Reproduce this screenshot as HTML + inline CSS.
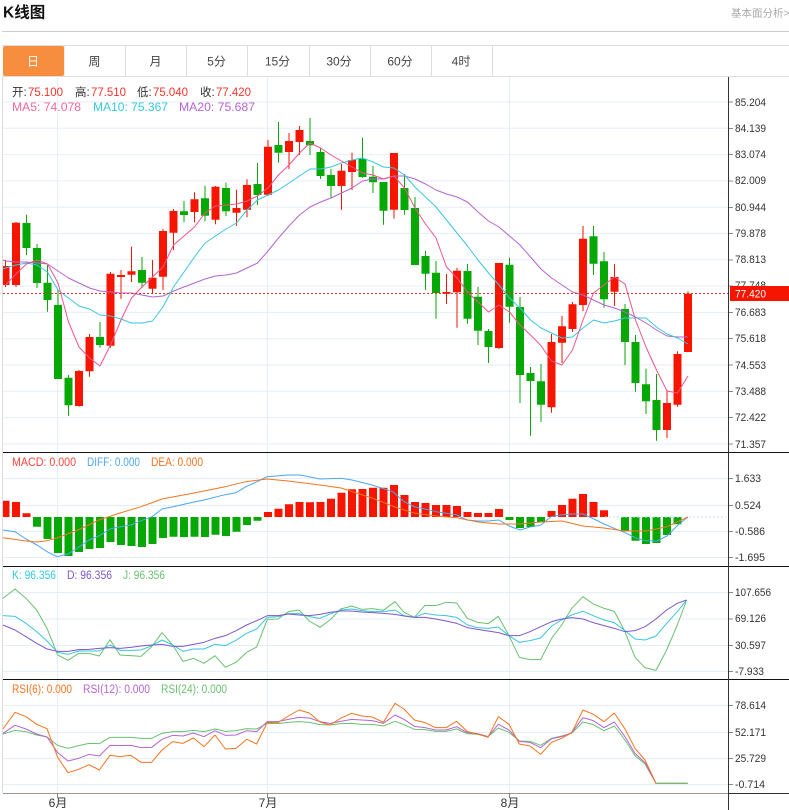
<!DOCTYPE html>
<html lang="zh">
<head>
<meta charset="utf-8">
<title>K线图</title>
<style>
html,body{margin:0;padding:0;background:#fff;width:789px;height:810px;overflow:hidden}
svg{display:block}
text{font-family:"Liberation Sans","Noto Sans CJK SC",sans-serif;font-size:11.5px}
.ax{font-size:11px;fill:#333}
.tab{font-size:12px;fill:#444;text-anchor:middle}
.grid{stroke:#e6eef5;stroke-width:1;fill:none}
.l{fill:none;stroke-width:1;stroke-linejoin:round}
.s .l{vector-effect:non-scaling-stroke}
.tick{stroke:#888;stroke-width:1}
</style>
</head>
<body>
<svg width="789" height="810" viewBox="0 0 789 810" xmlns="http://www.w3.org/2000/svg">
<rect width="789" height="810" fill="#fff"/>
<text x="3" y="17.500" style="font-size:15.5px;font-weight:bold" fill="#111">K线图</text>
<text x="731" y="16.500" style="font-size:10.5px" fill="#aaa">基本面分析&gt;</text>
<path d="M2 31.500H789" stroke="#ccc"/>
<path d="M2 45.500H789M2 76.500H789" stroke="#ddd"/>
<path d="M64 46V76M125.500 46V76M186.500 46V76M247.500 46V76M309.500 46V76M370.500 46V76M431.500 46V76M492.500 46V76" stroke="#ddd"/>
<rect x="3" y="46" width="61" height="30" rx="2" fill="#f68d3f"/>
<text x="33" y="65.500" class="tab" style="fill:#fff">日</text>
<text x="94.500" y="65.500" class="tab">周</text>
<text x="155.500" y="65.500" class="tab">月</text>
<text x="216.500" y="65.500" class="tab">5分</text>
<text x="277.500" y="65.500" class="tab">15分</text>
<text x="339" y="65.500" class="tab">30分</text>
<text x="400" y="65.500" class="tab">60分</text>
<text x="461" y="65.500" class="tab">4时</text>

<!-- grids -->
<path class="grid" d="M3 102H728M3 128.300H728M3 154.600H728M3 180.900H728M3 207.200H728M3 233.500H728M3 259.800H728M3 286.100H728M3 312.400H728M3 338.700H728M3 365H728M3 391.300H728M3 417.600H728M3 443.900H728"/>
<path class="grid" d="M3 478.500H728M3 505.500H728M3 531.500H728M3 557.500H728M3 592.500H728M3 619H728M3 645.500H728M3 671.500H728M3 705.500H728M3 732.500H728M3 758.500H728M3 784.500H728"/>
<path class="grid" d="M57.500 77V793M267.500 77V793M509.500 77V793"/>
<path d="M2.500 77V793" stroke="#dcdcdc"/>

<!-- candle wicks -->
<path stroke="#f51500" fill="none" d="M5.500 260V287M16 222V287M79 370V406.700M89.500 334V376.700M110.500 272V347.700M121 270V299M131.500 246.700V282M152.500 260V294M163 229V290M173.500 209V250M194.500 192.300V222.300M215.500 186V224.300M236.500 189.700V225.700M247 179.300V217.300M268 140V196M289 133V169M299.500 126V155M341.500 164V209.700M352 152.700V190M394 153V218.700M446.500 274V304M457 267.700V327.700M499 263V349M551.500 334V412.700M562 316V363M572.500 302V332M583 226V311M614.500 264V306M667 390V438M677.500 351.300V406.700M688 291.300V352"/>
<path stroke="#05a805" fill="none" d="M26.500 214.700V255M37 244V288M47.500 265V311.700M58 290V379M68.500 375V415.700M100 322V347.700M142 257V288M184 201V222.300M205 185.700V221.300M226 182.700V216M257.500 163V205M278.500 122V162.700M310 118V155M320.500 148V179M331 169V198M362.500 137.700V177.700M373 166V193M383.500 182V224.700M404.500 174V214.700M415 197V265M425.500 251V290M436 261V318.700M467.500 264V323.700M478 287V345M488.500 329V363M509.500 257.700V322.700M520 297V403M530.500 367V435.700M541 364V422M593.500 226V275M604 252V307.700M625 304V365M635.500 335V391.700M646 368.700V414M656.500 374V440.700"/>
<!-- candle bodies -->
<path fill="#f51500" d="M3 266H9.500V285H3zM12 222.700h8V285h-8zM75 371h8V406h-8zM85.500 337h8V371.300h-8zM106.500 273.700h8V345.700h-8zM117 275h8v2h-8zM127.500 271.300h8V274.700h-8zM148.500 277.700h8V288.700h-8zM159 231h8V276.700h-8zM169.500 211h8V232.700h-8zM190.500 199.300h8V212h-8zM211.500 186.700h8V219.700h-8zM232.500 208h8V212.700h-8zM243 185h8V209.700h-8zM264 146.700h8V194.700h-8zM285 141h8V152h-8zM295.500 130h8V142h-8zM337.500 170.700h8V186h-8zM348 160h8V172h-8zM390 153h8V209.700h-8zM442.500 292h8V293.700h-8zM453 270.700h8V292.300h-8zM495 263h8V348h-8zM547.500 342h8V407.300h-8zM558 326.300h8V342.700h-8zM568.500 304.300h8V329h-8zM579 238.700h8V305h-8zM610.500 277h8V291.700h-8zM663 403h8V430h-8zM673.500 354h8V404.700h-8zM684 293.700h8V352h-8z"/>
<path fill="#05a805" d="M22.500 223h8V248h-8zM33 248h8V283h-8zM43.500 282.700h8V300h-8zM54 305h8V379h-8zM64.500 377.700h8V405.300h-8zM96 337h8V345h-8zM138 270h8V282.700h-8zM180 211.300h8V215h-8zM201 198.300h8V215.700h-8zM222 188h8V211.300h-8zM253.500 184h8V195h-8zM274.500 145h8V152.700h-8zM306 141h8V145.300h-8zM316.500 152h8V176h-8zM327 175h8V186h-8zM358.500 158.700h8V177h-8zM369 176.700h8V182.300h-8zM379.500 182h8V210.700h-8zM400.500 188h8V210h-8zM411 208h8V265h-8zM421.500 256h8V273.700h-8zM432 272.700h8V293h-8zM463.500 271h8V318.700h-8zM474 296.700h8V330.700h-8zM484.500 331h8V347h-8zM505.500 264.700h8V306.700h-8zM516 307h8V375h-8zM526.500 373h8V381h-8zM537 381.300h8V404.700h-8zM589.500 236.300h8V263.700h-8zM600 261.300h8V299.300h-8zM621 309h8V342h-8zM631.500 342h8V383h-8zM642 384.300h8V401.300h-8zM652.500 400h8V430h-8z"/>

<!-- MA lines -->
<polyline class="l" stroke="#b565d0" points="3,260 5.500,261 16,262 26.500,262 37,263 47.500,264 58,271 68.500,278 79,283 89.500,288 100,291 110.500,292 121,293 131.500,293 142,295 152.500,297 163,296 173.500,291 184,287 194.500,283 205,279 215.500,276 226,275 236.500,273 247,268 257.500,263 268,251 278.500,238 289,226 299.500,215 310,207 320.500,202 331,198 341.500,193 352,188 362.500,181 373,179 383.500,179 394,176 404.500,176 415,179 425.500,184 436,190 446.500,194 457,197 467.500,202 478,212 488.500,221 499,227 509.500,236 520,245 530.500,257 541,269 551.500,278 562,285 572.500,292 583,295 593.500,300 604,305 614.500,308 625,312 635.500,317 646,323 656.500,330 667,336 677.500,337 688,337"/>
<polyline class="l" stroke="#39c6dd" points="3,269 5.500,268 16,265 26.500,263 37,265 47.500,272 58,290 68.500,298 79,306 89.500,309 100,315 110.500,316 121,319 131.500,323 142,323 152.500,321 163,307 173.500,287 184,272 194.500,257 205,243 215.500,236 226,229 236.500,223 247,210 257.500,200 268,195 278.500,190 289,183 299.500,176 310,169 320.500,169 331,167 341.500,163 352,160 362.500,158 373,162 383.500,167 394,168 404.500,175 415,187 425.500,197 436,207 446.500,220 457,233 467.500,246 478,260 488.500,273 499,285 509.500,298 520,308 530.500,320 541,328 551.500,333 562,338 572.500,337 583,328 593.500,320 604,323 614.500,321 625,318 635.500,318 646,318 656.500,327 667,334 677.500,338 688,344"/>
<polyline class="l" stroke="#f0548c" points="5.500,285 16,274 26.500,264 37,260 47.500,264 58,283 68.500,322 79,347 89.500,358 100,366 110.500,345 121,320 131.500,298 142,287 152.500,277 163,267 173.500,245 184,236 194.500,227 205,213 215.500,206 226,205 236.500,204 247,201 257.500,196 268,188 278.500,175 289,165 299.500,153 310,143 320.500,148 331,155 341.500,161 352,167 362.500,173 373,175 383.500,179 394,176 404.500,188 415,208 425.500,224 436,238 446.500,267 457,278 467.500,292 478,302 488.500,312 499,305 509.500,312 520,325 530.500,335 541,345.700 551.500,361 562,365 572.500,350 583,320 593.500,293 604,285 614.500,277 625,284 635.500,320 646,347 656.500,370 667,391 677.500,393 688,376"/>
<path d="M3 293.500H730" stroke="#e5312a" stroke-dasharray="2 2"/>

<!-- MACD -->
<path fill="#f51500" d="M3 500.700H9.500V517H3zM12 502h8v15h-8zM22.500 513.300h8V517h-8zM264 512h8v5h-8zM274.500 508.700h8V517h-8zM285 504.300h8V517h-8zM295.500 502h8v15h-8zM306 502.300h8V517h-8zM316.500 502h8v15h-8zM327 498.700h8V517h-8zM337.500 492.700h8V517h-8zM348 489.300h8V517h-8zM358.500 489h8v28h-8zM369 487.700h8V517h-8zM379.500 487.700h8V517h-8zM390 485h8v32h-8zM400.500 495h8v22h-8zM411 502h8v15h-8zM421.500 503h8v14h-8zM432 505h8v12h-8zM442.500 505h8v12h-8zM453 506h8v11h-8zM463.500 512h8v5h-8zM474 513h8v4h-8zM484.500 513h8v4h-8zM495 509h8v8h-8zM547.500 511h8v6h-8zM558 505h8v12h-8zM568.500 498.700h8V517h-8zM579 494h8v23h-8zM589.500 502h8v15h-8zM600 510.300h8V517h-8z"/>
<path fill="#05a805" d="M33 517h8v9.700h-8zM43.500 517h8v22h-8zM54 517h8v36h-8zM64.500 517h8v39h-8zM75 517h8v35h-8zM85.500 517h8v32h-8zM96 517h8v31h-8zM106.500 517h8v25h-8zM117 517h8v28h-8zM127.500 517h8v29h-8zM138 517h8v30h-8zM148.500 517h8v27h-8zM159 517h8v21h-8zM169.500 517h8v19.700h-8zM180 517h8v20h-8zM190.500 517h8v19.700h-8zM201 517h8v20h-8zM211.500 517h8v17.700h-8zM222 517h8v19h-8zM232.500 517h8v14.700h-8zM243 517h8v8h-8zM253.500 517h8v3.700h-8zM505.500 517h8v3h-8zM516 517h8v11h-8zM526.500 517h8v10h-8zM537 517h8v5.300h-8zM621 517h8v14.300h-8zM631.500 517h8v23.700h-8zM642 517h8v27h-8zM652.500 517h8v26h-8zM663 517h8v18h-8zM673.500 517h8v7.300h-8z"/>
<path d="M605 517H726" stroke="#bfe3ee" stroke-dasharray="2 2"/>
<polyline class="l" stroke="#4da6f0" points="3,530 15,531.700 26,539 37,545 47,551.700 57,556.700 68,554 78,547.700 89,540 99,536 110,529 120,526.700 131,525 141,520.700 152,516.700 162,509 173,506.700 194,502 204,500 225,494.700 236,492.700 246,486.700 257,481.700 267,476.700 288,475 300,475 320,479 341,478.300 352,480 372,485 393,491.700 404,501.700 415,507 425,509 436,511.700 457,515 467,520 478,521 488,521 499,520 509,526 520,530 530,527 541,525 551,516.700 562,514.700 573,514 583,514 594,519 604,524 615,528.700 625,532.700 636,538 646,540.700 657,541 667,536 678,525 688,517"/>
<polyline class="l" stroke="#f5741f" points="3,537.700 26,541 37,542 47,540.700 57,538 78,530 99,520 120,513 141,506.700 162,499 194,493 225,486.700 246,481.700 267,479 288,481 320,485 341,488 372,498 395,507 415,513.300 436,516 457,517.700 478,522 499,524 520,524 541,522 562,521 583,526 604,528 625,531 646,531 667,526.700 688,517"/>

<!-- KDJ -->
<g class="s" transform="translate(0,565) scale(.33333)">
<polyline class="l" stroke="#6ac06f" points="9,100 45,72 78,100 110,135 141,190 173,270 204,286 236,265 267,265 298,273 330,224 360,270 392,272 423,274 455,245 486,203 518,240 549,289 580,280 612,295 645,272 676,307 708,292 740,262 770,246 802,163 834,162 865,140 897,135 928,168 960,187 990,165 1022,132 1055,123 1085,133 1117,131 1150,136 1185,110 1212,142 1243,157 1275,121 1307,122 1338,112 1370,114 1402,160 1433,172 1464,176 1495,154 1527,212 1558,277 1590,284 1622,284 1655,220 1685,180 1715,130 1749,95 1780,117 1812,130 1843,139 1875,200 1905,277 1935,308 1968,316 2000,255 2032,180 2060,105"/>
<polyline class="l" stroke="#39c6dd" points="9,152 45,154 78,175 110,200 141,228 173,262 204,268 236,258 267,258 298,258 330,240 360,256 392,256 423,255 455,242 486,225 518,240 549,259 580,252 612,252 645,238 676,242 708,226 740,205 770,192 802,157 834,155 865,146 897,146 928,155 960,160 990,147 1022,135 1055,132 1085,137 1117,140 1150,140 1185,135 1212,152 1243,157 1275,145 1307,150 1338,152 1370,157 1402,180 1433,188 1464,190 1495,186 1527,212 1558,232 1590,227 1622,219 1655,183 1685,165 1715,150 1749,139 1780,152 1812,165 1843,173 1875,197 1905,222 1935,225 1968,213 2000,175 2032,140 2060,105"/>
<polyline class="l" stroke="#7d58c8" points="9,180 45,195 78,215 110,235 141,252 173,259 204,259 236,254 267,253 298,250 330,248 360,250 392,247 423,243 455,240 486,238 518,244 549,244 580,238 612,232 645,220 676,212 708,197 740,180 770,167 802,152 834,152 865,147 897,150 928,152 960,148 990,142 1022,138 1055,138 1085,141 1117,143 1150,145 1185,148 1212,153 1243,157 1275,157 1307,162 1338,168 1370,175 1402,188 1433,193 1464,198 1495,203 1527,212 1558,212 1590,200 1622,185 1655,170 1685,162 1715,158 1749,162 1780,173 1812,182 1843,190 1875,200 1905,197 1935,185 1968,162 2000,135 2032,115 2060,105"/>
</g>

<!-- RSI -->
<g class="s" transform="translate(0,680) scale(.33333)">
<polyline class="l" stroke="#6ac06f" points="9,162 45,151 78,155 110,165 141,171 173,196 204,205 236,197 267,190 298,191 330,172 360,172 392,172 423,175 455,175 486,160 518,155 549,155 580,151 612,155 645,147 676,154 708,152 740,146 770,147 802,130 834,131 865,127 897,125 928,127 960,134 990,135 1022,131 1055,130 1085,133 1117,133 1150,138 1185,124 1212,134 1243,148 1275,149 1307,154 1338,154 1370,147 1402,161 1433,163 1464,170 1495,144 1527,157 1558,183 1590,184 1622,196 1655,175 1685,168 1715,160 1749,126 1780,134 1812,152 1843,138 1875,180 1905,227 1935,252 1968,310 2063,310"/>
<polyline class="l" stroke="#b565d0" points="9,160 45,136 78,147 110,162 141,171 173,218 204,243 236,235 267,223 298,228 330,196 360,197 392,196 423,203 455,202 486,178 518,166 549,168 580,159 612,170 645,152 676,166 708,165 740,152 770,155 802,125 834,125 865,118 897,112 928,114 960,125 990,130 1022,124 1055,118 1085,120 1117,122 1150,130 1185,105 1212,118 1243,139 1275,143 1307,150 1338,150 1370,140 1402,158 1433,161 1464,170 1495,133 1527,150 1558,184 1590,187 1622,203 1655,176 1685,170 1715,158 1749,113 1780,122 1812,143 1843,126 1875,170 1905,220 1935,248 1968,310 2063,310"/>
<polyline class="l" stroke="#f5741f" points="9,147 45,97 78,110 110,133 141,146 173,232 204,278 236,268 267,254 298,270 330,226 360,230 392,226 423,247 455,247 486,210 518,185 549,190 580,174 612,200 645,165 676,207 708,205 740,178 770,192 802,127 834,128 865,108 897,90 928,99 960,126 990,135 1022,115 1055,100 1085,108 1117,111 1150,127 1185,70 1212,87 1243,120 1275,128 1307,143 1338,143 1370,124 1402,155 1433,162 1464,172 1495,110 1527,133 1558,192 1590,198 1622,223 1655,187 1685,175 1715,158 1749,90 1780,103 1812,125 1843,99 1875,147 1905,205 1935,240 1968,310 2063,310"/>
<polyline class="l" stroke="#6ac06f" points="1968,310 2063,310"/>
</g>

<!-- frame -->
<path d="M3 452.500H789M3 566.500H789M3 679.500H789" stroke="#111" fill="none"/>
<path d="M3 793.500H728" stroke="#999"/>
<path d="M728.500 793.500H789" stroke="#333"/>
<path d="M728.500 77V810" stroke="#333"/>
<path class="tick" d="M57.500 793V798M267.500 793V798M509.500 793V798"/>
<path class="tick" d="M729 102H733M729 128.500H733M729 154.500H733M729 181H733M729 207.500H733M729 233.500H733M729 260H733M729 286H733M729 312.500H733M729 338.500H733M729 365H733M729 391.500H733M729 417.500H733M729 444H733M729 478.500H733M729 505.500H733M729 531.500H733M729 557.500H733M729 592.500H733M729 619H733M729 645.500H733M729 671.500H733M729 705.500H733M729 732.500H733M729 758.500H733M729 784.500H733"/>

<!-- axis labels -->
<text class="ax" x="735" y="106" textLength="31" lengthAdjust="spacingAndGlyphs">85.204</text>
<text class="ax" x="735" y="132" textLength="31" lengthAdjust="spacingAndGlyphs">84.139</text>
<text class="ax" x="735" y="158" textLength="31" lengthAdjust="spacingAndGlyphs">83.074</text>
<text class="ax" x="735" y="184" textLength="31" lengthAdjust="spacingAndGlyphs">82.009</text>
<text class="ax" x="735" y="211" textLength="31" lengthAdjust="spacingAndGlyphs">80.944</text>
<text class="ax" x="735" y="237" textLength="31" lengthAdjust="spacingAndGlyphs">79.878</text>
<text class="ax" x="735" y="263" textLength="31" lengthAdjust="spacingAndGlyphs">78.813</text>
<text class="ax" x="735" y="289" textLength="31" lengthAdjust="spacingAndGlyphs">77.748</text>
<text class="ax" x="735" y="316" textLength="31" lengthAdjust="spacingAndGlyphs">76.683</text>
<text class="ax" x="735" y="342" textLength="31" lengthAdjust="spacingAndGlyphs">75.618</text>
<text class="ax" x="735" y="369" textLength="31" lengthAdjust="spacingAndGlyphs">74.553</text>
<text class="ax" x="735" y="395" textLength="31" lengthAdjust="spacingAndGlyphs">73.488</text>
<text class="ax" x="735" y="421" textLength="31" lengthAdjust="spacingAndGlyphs">72.422</text>
<text class="ax" x="735" y="448" textLength="31" lengthAdjust="spacingAndGlyphs">71.357</text>
<rect x="730" y="286" width="59" height="15" fill="#f51500"/>
<text class="ax" x="735" y="297.500" textLength="31" lengthAdjust="spacingAndGlyphs" style="fill:#fff">77.420</text>

<text class="ax" x="735" y="482" textLength="26" lengthAdjust="spacingAndGlyphs">1.633</text>
<text class="ax" x="735" y="509" textLength="26" lengthAdjust="spacingAndGlyphs">0.524</text>
<text class="ax" x="735" y="535" textLength="30" lengthAdjust="spacingAndGlyphs">-0.586</text>
<text class="ax" x="735" y="561" textLength="30" lengthAdjust="spacingAndGlyphs">-1.695</text>

<text class="ax" x="735" y="596" textLength="36" lengthAdjust="spacingAndGlyphs">107.656</text>
<text class="ax" x="735" y="622" textLength="31" lengthAdjust="spacingAndGlyphs">69.126</text>
<text class="ax" x="735" y="649" textLength="31" lengthAdjust="spacingAndGlyphs">30.597</text>
<text class="ax" x="735" y="675" textLength="29" lengthAdjust="spacingAndGlyphs">-7.933</text>

<text class="ax" x="735" y="709" textLength="31" lengthAdjust="spacingAndGlyphs">78.614</text>
<text class="ax" x="735" y="736" textLength="31" lengthAdjust="spacingAndGlyphs">52.171</text>
<text class="ax" x="735" y="762" textLength="31" lengthAdjust="spacingAndGlyphs">25.729</text>
<text class="ax" x="735" y="788" textLength="30" lengthAdjust="spacingAndGlyphs">-0.714</text>

<text x="58" y="807" text-anchor="middle" style="font-size:12px" fill="#333">6月</text>
<text x="268" y="807" text-anchor="middle" style="font-size:12px" fill="#333">7月</text>
<text x="510" y="807" text-anchor="middle" style="font-size:12px" fill="#333">8月</text>

<!-- legends -->
<text x="12" y="96" fill="#333">开:</text><text x="28" y="96" fill="#f5332b" textLength="35" lengthAdjust="spacingAndGlyphs">75.100</text>
<text x="75" y="96" fill="#333">高:</text><text x="91" y="96" fill="#f5332b" textLength="35" lengthAdjust="spacingAndGlyphs">77.510</text>
<text x="137" y="96" fill="#333">低:</text><text x="153" y="96" fill="#f5332b" textLength="35" lengthAdjust="spacingAndGlyphs">75.040</text>
<text x="200" y="96" fill="#333">收:</text><text x="216" y="96" fill="#f5332b" textLength="35" lengthAdjust="spacingAndGlyphs">77.420</text>
<text x="12" y="111" fill="#f0689a" textLength="69" lengthAdjust="spacingAndGlyphs">MA5: 74.078</text>
<text x="93" y="111" fill="#36c9dd" textLength="75" lengthAdjust="spacingAndGlyphs">MA10: 75.367</text>
<text x="179" y="111" fill="#b565d0" textLength="76" lengthAdjust="spacingAndGlyphs">MA20: 75.687</text>

<text x="12" y="466" fill="#f5453c" textLength="64" lengthAdjust="spacingAndGlyphs">MACD: 0.000</text>
<text x="87" y="466" fill="#4da6f0" textLength="53" lengthAdjust="spacingAndGlyphs">DIFF: 0.000</text>
<text x="151" y="466" fill="#f5741f" textLength="52" lengthAdjust="spacingAndGlyphs">DEA: 0.000</text>

<text x="12" y="579" fill="#36c9dd" textLength="44" lengthAdjust="spacingAndGlyphs">K: 96.356</text>
<text x="67" y="579" fill="#7d58c8" textLength="45" lengthAdjust="spacingAndGlyphs">D: 96.356</text>
<text x="123" y="579" fill="#6ac06f" textLength="42" lengthAdjust="spacingAndGlyphs">J: 96.356</text>

<text x="12" y="693" fill="#f5741f" textLength="60" lengthAdjust="spacingAndGlyphs">RSI(6): 0.000</text>
<text x="83" y="693" fill="#b565d0" textLength="67" lengthAdjust="spacingAndGlyphs">RSI(12): 0.000</text>
<text x="161" y="693" fill="#6ac06f" textLength="66" lengthAdjust="spacingAndGlyphs">RSI(24): 0.000</text>
</svg>
</body>
</html>
